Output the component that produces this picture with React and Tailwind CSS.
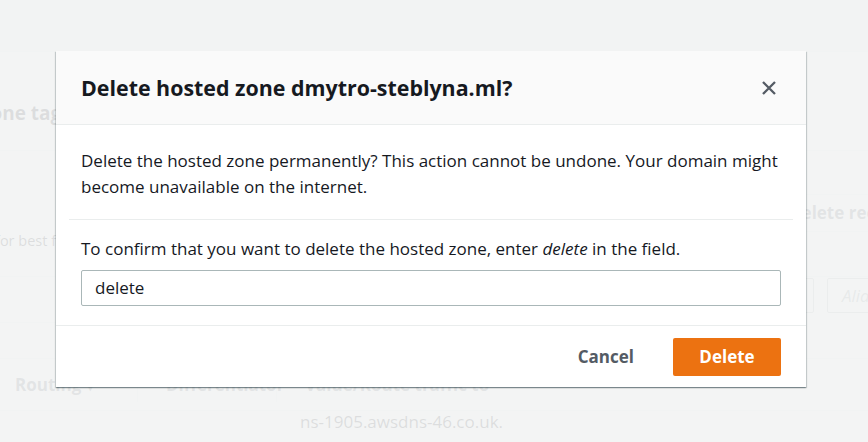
export default function App() {
  return (
    <div className="relative w-[868px] h-[442px] overflow-hidden bg-white font-['Open_Sans','Noto_Sans',sans-serif] text-[#16191f]">
      {/* Background page */}
      <div className="flex flex-col h-full">
        <div className="h-[52px] shrink-0 bg-[#f2f3f3] border-b border-[#eaeded]" />
        <div className="h-[99px] shrink-0 border-b border-[#eaeded] flex items-center">
          <span className="-ml-[91px] mt-[24px] text-[19px] font-bold whitespace-nowrap">Hosted zone tags</span>
        </div>
        <div className="h-[125px] shrink-0 flex">
          <div className="flex-1 flex flex-col justify-end pb-[24px]">
            <span className="-ml-[5px] text-[14.5px] whitespace-nowrap">for best fit</span>
          </div>
          <div className="w-[80px] shrink-0 flex flex-col">
            <div className="h-[44px] border-b border-[#eaeded]" />
            <div className="h-[37px] border-b border-[#eaeded] flex items-center">
              <span className="ml-[1px] text-[17px] font-bold whitespace-nowrap text-[#545b64]">Delete record</span>
            </div>
          </div>
        </div>
        <div className="h-[82px] shrink-0 flex border-t border-[#eaeded]">
          <div className="flex-1 flex flex-col">
            <div className="h-[46px] border-b border-[#eaeded]" />
          </div>
          <div className="w-[88px] shrink-0 flex gap-[13px] pt-[1px]">
            <div className="w-[34px] h-[35px] shrink-0 border border-[#aab7b8] rounded-[2px]" />
            <div className="w-[80px] shrink-0 h-[35px] border border-[#aab7b8] rounded-[2px] px-[14px] flex items-center">
              <span className="italic text-[17px] text-[#879596]">Alias</span>
            </div>
          </div>
        </div>
        <div className="h-[53px] shrink-0 border-t border-b border-[#eaeded] flex items-center text-[17px] font-bold text-[#545b64]">
          <div className="w-[138px] pl-[15px] border-r border-[#eaeded] h-[34px] flex items-center whitespace-nowrap">Routing ▾</div>
          <div className="w-[139px] pl-[28px] border-r border-[#eaeded] h-[34px] flex items-center whitespace-nowrap">Differentiator</div>
          <div className="pl-[28px] whitespace-nowrap">Value/Route traffic to</div>
        </div>
        <div className="flex-1 flex items-center pl-[300px] text-[17px]">
          <span className="-mt-[10px]">ns-1905.awsdns-46.co.uk.</span>
        </div>
      </div>

      {/* Overlay */}
      <div className="absolute inset-0 bg-[rgba(242,243,243,0.9)]" />

      {/* Modal */}
      <div className="absolute left-[56px] top-[51px] w-[750px] bg-white shadow-[0_1px_1px_0_rgba(0,28,36,0.3),1px_1px_1px_0_rgba(0,28,36,0.15),-1px_1px_1px_0_rgba(0,28,36,0.15)]">
        <div className="h-[74px] bg-[#fafafa] border-b border-[#eaeded] pl-[25px] pr-[29px] flex items-center justify-between">
          <h2 className="text-[21.4px] font-bold text-[#16191f] leading-[30px]">Delete hosted zone dmytro-steblyna.ml?</h2>
          <svg width="16" height="16" viewBox="0 0 16 16" fill="none" stroke="#545b64" strokeWidth="2.3" strokeLinecap="butt">
            <path d="M2 2L14 14M14 2L2 14" />
          </svg>
        </div>
        <div className="px-[13px] pt-[23px]">
          <p className="px-[12px] text-[17px] leading-[26.4px] whitespace-nowrap">
            Delete the hosted zone permanently? This action cannot be undone. Your domain might
            <br />
            become unavailable on the internet.
          </p>
          <div className="mt-[18px] border-t border-[#eaeded]" />
          <div className="px-[12px] pt-[16px] pb-[19px]">
            <p className="text-[17px] leading-[26.4px] whitespace-nowrap">
              To confirm that you want to delete the hosted zone, enter <em>delete</em> in the field.
            </p>
            <div className="mt-[8px] h-[36px] border border-[#aab7b8] rounded-[2px] px-[13px] flex items-center text-[17px]">
              delete
            </div>
          </div>
        </div>
        <div className="h-[62px] border-t border-[#eaeded] flex items-center justify-end pr-[25px] gap-[15px]">
          <button className="h-[38px] px-[24px] text-[17px] font-bold text-[#545b64]">Cancel</button>
          <button className="h-[38px] w-[108px] rounded-[2px] bg-[#ec7211] text-[17px] font-bold text-white">Delete</button>
        </div>
      </div>
    </div>
  );
}
